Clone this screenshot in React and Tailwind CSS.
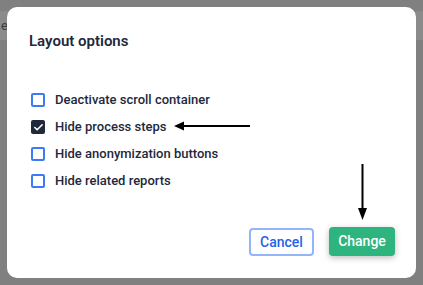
import { Check } from 'lucide-react';

const options = [
  { label: 'Deactivate scroll container', checked: false },
  { label: 'Hide process steps', checked: true },
  { label: 'Hide anonymization buttons', checked: false },
  { label: 'Hide related reports', checked: false },
];

function Box({ checked }) {
  if (checked) {
    return (
      <span className="w-[14px] h-[14px] rounded-[2px] bg-[#1e293b] flex items-center justify-center shrink-0">
        <Check size={11} strokeWidth={3.5} className="text-white" />
      </span>
    );
  }
  return <span className="w-[14px] h-[14px] rounded-[2px] border-2 border-[#3b7cf6] bg-white shrink-0" />;
}

export default function App() {
  return (
    <div className="relative w-[423px] h-[285px] bg-[#808080] overflow-hidden" style={{ fontFamily: 'Roboto, "Liberation Sans", sans-serif' }}>
      {/* page behind the modal */}
      <div className="mt-[11px] h-[29px] bg-[#8b8b8b] flex items-center text-[13px] text-[#3a3a3a] pl-[1px]">
        e
      </div>

      <div className="absolute left-[7px] top-[7px] w-[409px] h-[271px] bg-white rounded-[10px] flex flex-col pt-[24px] pl-[22px] pr-[21px] pb-[22px]">
        <h2 className="text-[15px] leading-[20px] font-semibold text-[#1e293b]">Layout options</h2>

        <div className="mt-[39px] flex flex-col gap-[7px] pl-[2px]">
          {options.map((o) => (
            <label key={o.label} className="flex items-center gap-[10px] h-[20px]">
              <Box checked={o.checked} />
              <span className="text-[13px] font-medium text-[#1e293b]">{o.label}</span>
            </label>
          ))}
        </div>

        <div className="flex-1" />

        <div className="flex justify-end gap-[15px] items-end">
          <button className="w-[65px] h-[28px] rounded-[4px] border-2 border-[#93b5fb] text-[#2563eb] text-[14px] font-medium bg-white">
            Cancel
          </button>
          <button className="w-[66px] h-[29px] rounded-[4px] bg-[#2eb47e] text-white text-[14px] font-medium shadow-[0_2px_6px_rgba(0,0,0,0.25)]">
            Change
          </button>
        </div>
      </div>

      {/* annotation arrows */}
      <svg className="absolute left-0 top-0" width="423" height="285">
        <line x1="182" y1="126" x2="250" y2="126" stroke="#000" strokeWidth="2" />
        <polygon points="174,126 184,121.5 184,130.5" fill="#000" />
        <line x1="362.5" y1="164" x2="362.5" y2="210" stroke="#000" strokeWidth="2" />
        <polygon points="362.5,220 358,208 367,208" fill="#000" />
      </svg>
    </div>
  );
}
